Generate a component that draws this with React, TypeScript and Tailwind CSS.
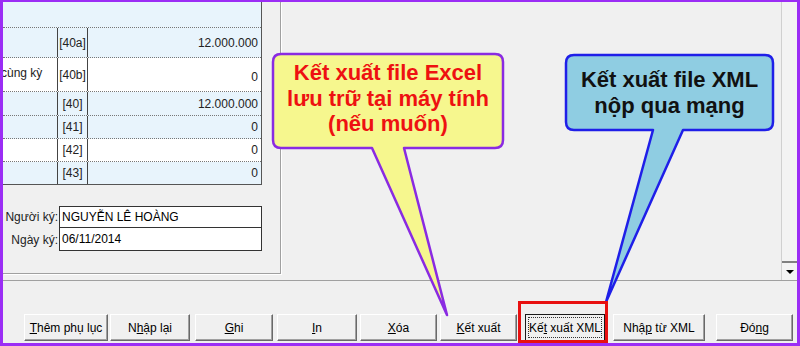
import React from "react";

const font = { fontFamily: '"Liberation Sans", Arial, sans-serif' };

type Row = { label?: string; code: string; value: string; h: string; bg: string };

const rows: Row[] = [
  { code: "[40a]", value: "12.000.000", h: "h-[30px]", bg: "bg-[#e8f4fc]" },
  { label: "cùng kỳ", code: "[40b]", value: "0", h: "h-[34px]", bg: "bg-white" },
  { code: "[40]", value: "12.000.000", h: "h-[24px]", bg: "bg-[#e8f4fc]" },
  { code: "[41]", value: "0", h: "h-[23px]", bg: "bg-[#e8f4fc]" },
  { code: "[42]", value: "0", h: "h-[23px]", bg: "bg-white" },
  { code: "[43]", value: "0", h: "h-[22px]", bg: "bg-[#e8f4fc]" },
];

type Btn = { key: string; w: string; ml: string; label: React.ReactNode; focus?: boolean };

const buttons: Btn[] = [
  { key: "them", w: "w-[84px]", ml: "ml-[21px]", label: <><u>T</u>hêm phụ lục</> },
  { key: "nhap", w: "w-[80px]", ml: "ml-[2px]", label: <>N<u>h</u>ập lại</> },
  { key: "ghi", w: "w-[78px]", ml: "ml-[5px]", label: <><u>G</u>hi</> },
  { key: "in", w: "w-[80px]", ml: "ml-[4px]", label: <><u>I</u>n</> },
  { key: "xoa", w: "w-[77px]", ml: "ml-[3px]", label: <><u>X</u>óa</> },
  { key: "ketxuat", w: "w-[77px]", ml: "ml-[3px]", label: <><u>K</u>ết xuất</> },
  { key: "xml", w: "w-[80px]", ml: "ml-[8px]", label: <>Kế<u>t</u> xuất XML</>, focus: true },
  { key: "nhapxml", w: "w-[92px]", ml: "ml-[8px]", label: <>Nhậ<u>p</u> từ XML</> },
  { key: "dong", w: "w-[77px]", ml: "ml-[11px]", label: <>Đó<u>n</u>g</> },
];

function WinButton({ b }: { b: Btn }) {
  if (b.focus) {
    return (
      <div className={`${b.w} ${b.ml} h-[27px] border border-[#1a1a1a] bg-[#f0f0f0] p-[2px]`}>
        <div className="h-full border border-dotted border-[#333] flex items-center justify-center text-[12px] text-black">
          <span className="whitespace-pre">{b.label}</span>
        </div>
      </div>
    );
  }
  return (
    <div
      className={`${b.w} ${b.ml} h-[27px] border border-t-white border-l-white border-r-[#696969] border-b-[#696969] bg-[#f0f0f0] shadow-[inset_-1px_-1px_0_#a0a0a0] flex items-center justify-center text-[12px] text-black`}
    >
      <span className="whitespace-pre">{b.label}</span>
    </div>
  );
}

export default function App() {
  return (
    <div
      className="relative w-[800px] h-[346px] overflow-hidden bg-[#f0f0f0] border-l-[3px] border-t-[2px] border-r-[3px] border-b-[3px] border-[#9b2df5]"
      style={font}
    >
      <div className="flex flex-col h-full">
        {/* top area */}
        <div className="flex h-[279px] border-b border-[#a0a0a0]">
          {/* left panel */}
          <div className="w-[278px] h-[272px] border-r border-b border-[#a0a0a0] shadow-[1px_1px_0_#ffffff] flex flex-col">
            <div className="w-[259px] border-r border-b border-[#555] bg-[#e8f4fc] text-[12px] text-[#222]">
              <div className="h-[26px] border-b border-dotted border-[#777]" />
              {rows.map((r) => (
                <div key={r.code} className={`flex ${r.h} ${r.bg} border-b border-dotted border-[#777] last:border-b-0`}>
                  <div className="w-[56px] overflow-hidden whitespace-nowrap pt-[6px] -ml-[2px]">{r.label}</div>
                  <div className="w-[31px] border-x border-[#444] flex items-center justify-center">{r.code}</div>
                  <div className={`flex-1 flex items-center justify-end pr-[3px] ${r.label ? "pt-[4px]" : ""}`}>{r.value}</div>
                </div>
              ))}
            </div>
            <div className="mt-[21px] flex flex-col text-[12px] text-[#222]">
              <div className="flex items-center h-[22px]">
                <div className="w-[56px] text-right pr-[1px]">Người ký:</div>
                <div className="w-[203px] h-full bg-white border border-[#333] flex items-center pl-[2px] text-black">
                  NGUYỄN LÊ HOÀNG
                </div>
              </div>
              <div className="flex items-center h-[23px]">
                <div className="w-[56px] text-right pr-[1px]">Ngày ký:</div>
                <div className="w-[203px] h-full bg-white border border-t-0 border-[#333] flex items-center pl-[2px] text-black">
                  06/11/2014
                </div>
              </div>
            </div>
          </div>
          {/* middle */}
          <div className="flex-1" />
          {/* scrollbar */}
          <div className="w-[16px] border-l border-[#d0d0d0] bg-[#f3f3f3] flex flex-col">
            <div className="flex-1" />
            <div className="h-[19px] border-t-2 border-[#808080] flex items-center justify-center">
              <div className="w-0 h-0 border-l-[4px] border-r-[4px] border-t-[4px] border-l-transparent border-r-transparent border-t-black" />
            </div>
          </div>
        </div>
        {/* button bar */}
        <div className="flex-1 flex items-start pt-[33px]">
          {buttons.map((b) => (
            <WinButton key={b.key} b={b} />
          ))}
        </div>
      </div>

      {/* annotations overlay */}
      <div className="absolute -left-[3px] -top-[2px] w-[800px] h-[346px] pointer-events-none">
        <svg width="800" height="346" className="absolute left-0 top-0">
          <path
            d="M281 54 H495 Q503 54 503 62 V140 Q503 148 495 148 H404 L447 315 L372 148 H281 Q273 148 273 140 V62 Q273 54 281 54 Z"
            fill="#f6f78e"
            stroke="#8a2be2"
            strokeWidth="2.5"
            strokeLinejoin="round"
          />
          <path
            d="M574 55 H765 Q773 55 773 63 V122 Q773 130 765 130 H683 L606 302 L653 130 H574 Q566 130 566 122 V63 Q566 55 574 55 Z"
            fill="#8fcde2"
            stroke="#1f1fe8"
            strokeWidth="2.5"
            strokeLinejoin="round"
          />
        </svg>
        <div className="absolute left-[273px] top-[54px] w-[230px] h-[94px] flex flex-col items-center justify-center pb-[5px] text-[22px] leading-[25.5px] font-bold text-[#ee1111]">
          <div>Kết xuất file Excel</div>
          <div>lưu trữ tại máy tính</div>
          <div>(nếu muốn)</div>
        </div>
        <div className="absolute left-[566px] top-[55px] w-[207px] h-[75px] flex flex-col items-center justify-center text-[22px] leading-[26px] font-bold text-[#111]">
          <div>Kết xuất file XML</div>
          <div>nộp qua mạng</div>
        </div>
        <div className="absolute left-[518px] top-[301px] w-[90px] h-[42px] border-[3px] border-[#e81010]" />
      </div>
    </div>
  );
}
